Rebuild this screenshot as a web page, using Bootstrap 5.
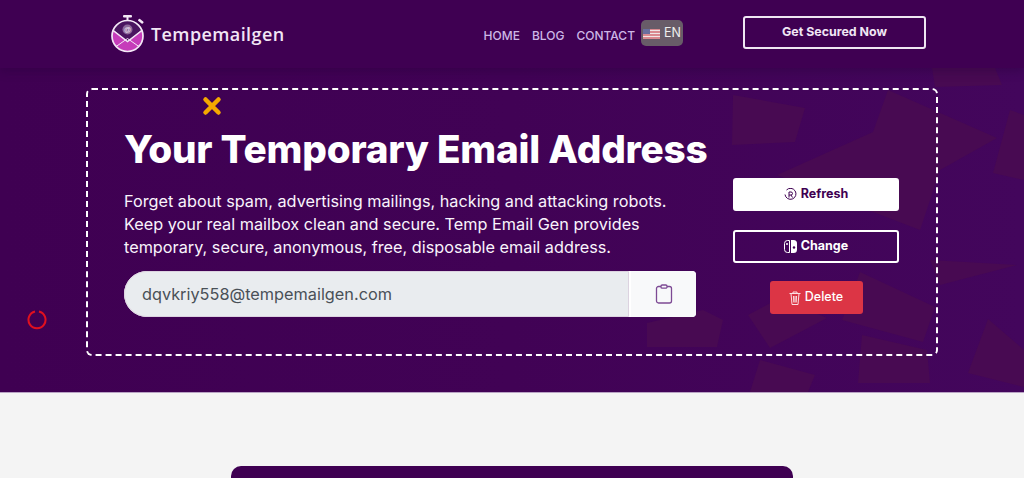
<!DOCTYPE html>
<html lang="en">
<head>
  <meta charset="UTF-8" />
  <meta name="viewport" content="width=device-width, initial-scale=1.0"/>
  <title>Tempemailgen</title>
  <link href="https://cdn.jsdelivr.net/npm/bootstrap@5.3.0/dist/css/bootstrap.min.css" rel="stylesheet"/>
  <style>
    body {
      background-color: #f4f4f4;
      font-family: "Inter", "Liberation Sans", sans-serif;
      overflow: hidden;
    }
    .page-wrap {
      height: 478px;
      overflow: hidden;
    }
    .site-head {
      position: relative;
      z-index: 2;
      height: 68px;
      background-color: #3f0052;
      box-shadow: 0 4px 8px rgba(40, 0, 60, .35);
      padding: 0 98px 0 110px;
    }
    .logo-text {
      font-family: "Open Sans", sans-serif;
      font-size: 18px;
      font-weight: 600;
      color: #f1e6f5;
      letter-spacing: .4px;
      margin-left: 5px;
    }
    .menu-link {
      font-size: 12px;
      font-weight: 500;
      color: #cdb7e6;
      text-decoration: none;
      margin-left: 12px;
      margin-top: 3px;
    }
    .lang-box {
      width: 42px;
      height: 26px;
      padding-top: 1px;
      margin-left: 6px;
      margin-top: -2px;
      border-radius: 5px;
      background-color: #685c68;
      color: #eee;
      font-size: 12.5px;
    }
    .btn-secured {
      width: 183px;
      height: 33px;
      margin-left: 60px;
      margin-top: -4px;
      padding: 0;
      border: 2px solid #efe6f3;
      border-radius: 3px;
      background: transparent;
      color: #f0e6f4;
      font-size: 12.4px;
      font-weight: 700;
    }
    .hero {
      height: 325px;
      background: linear-gradient(90deg, #3f0052 0%, #410255 50%, #43065c 100%);
      border-bottom: 1px solid #b9a3c4;
      padding: 20px 86px 0;
    }
    .hero-bg {
      position: absolute;
      top: 0;
      left: 0;
    }
    .dash-box {
      width: 852px;
      height: 268px;
      padding: 37px 36px 0;
      border: 2px dashed #fff;
      border-radius: 6px;
    }
    .deco-x {
      position: absolute;
      left: 202px;
      top: 28px;
    }
    .spin-ring {
      position: absolute;
      left: 27px;
      top: 242px;
      width: 20px;
      height: 20px;
    }
    .main-col {
      width: 572px;
      flex-shrink: 0;
    }
    .hero-title {
      font-size: 38.7px;
      font-weight: 800;
      line-height: 44px;
      color: #fff;
      margin: 0 0 19px;
      white-space: nowrap;
      letter-spacing: -.2px;
    }
    .hero-text {
      font-size: 16.25px;
      line-height: 23px;
      color: #f9f4fc;
      margin: 0 0 12px;
    }
    .mail-group {
      height: 46px;
      border-radius: 23px 4px 4px 23px;
      background-color: #fff;
    }
    .mail-input {
      flex: 1;
      padding-left: 17px;
      border-radius: 23px 0 0 23px;
      background-color: #e9ecef;
      font-size: 16.3px;
      color: #495057;
      border: 1px solid #dcd3e0;
    }
    .copy-btn {
      width: 65px;
      margin-left: 2px;
      border-radius: 0 4px 4px 0;
      background-color: #f8f9fa;
      border: 0;
      padding: 0;
    }
    .side-col {
      width: 166px;
      margin-left: 37px;
      margin-top: 51px;
    }
    .act-btn {
      width: 166px;
      height: 33px;
      padding: 0;
      font-size: 12.5px;
      font-weight: 700;
      border-radius: 3px;
      border: 2px solid #fff;
      margin-bottom: 19px;
    }
    .act-white {
      background-color: #fff;
      color: #3f0052;
    }
    .act-ghost {
      background: transparent;
      color: #fff;
    }
    .act-del {
      width: 93px;
      height: 33px;
      padding: 0;
      font-size: 12.5px;
      font-weight: 500;
      border-radius: 3px;
      background-color: #dc3545;
      border: 0;
      color: #fff;
      margin-top: -1px;
    }
    .lower {
      padding-top: 73px;
    }
    .lower-card {
      width: 562px;
      height: 40px;
      margin-left: 231px;
      border-radius: 10px;
      background-color: #3f0052;
    }
    .at-mark {
      font-size: 7px;
      font-family: "Liberation Sans", sans-serif;
    }
  </style>
</head>
<body>
  <div class="page-wrap">
    <header class="site-head d-flex align-items-center">
      <!-- logo -->
      <svg width="36" height="38" viewBox="0 0 36 38" class="flex-shrink-0">
        <defs>
          <clipPath id="watchClip"><circle cx="17.5" cy="21" r="15.5"/></clipPath>
        </defs>
        <rect x="13" y="0" width="9" height="2.6" rx="1" fill="#f3e8f6"/>
        <rect x="16.5" y="2" width="2" height="4" fill="#f3e8f6"/>
        <rect x="28" y="5" width="6" height="2.6" rx="1" fill="#f3e8f6" transform="rotate(38 31 6)"/>
        <circle cx="17.5" cy="21" r="15.5" fill="#4a1560"/>
        <g clip-path="url(#watchClip)">
          <path d="M0 12 17.5 26.5 35 12V38H0Z" fill="#c63cba"/>
          <path d="M2 14.5 17.5 26.5 33 14.500" fill="none" stroke="#f3e8f6" stroke-width="1.4"/>
          <path d="M4 33 17.500 23.500 31 33" fill="none" stroke="#f3e8f6" stroke-width="1"/>
        </g>
        <circle cx="17.5" cy="21" r="15.5" fill="none" stroke="#f3e8f6" stroke-width="1.7"/>
        <circle cx="17.5" cy="14.5" r="5" fill="#8e6b9c"/>
        <text x="17.5" y="17" text-anchor="middle" fill="#f3e8f6" class="at-mark">@</text>
      </svg>
      <span class="logo-text">Tempemailgen</span>
      <nav class="d-flex align-items-center ms-auto">
        <a href="#" class="menu-link">HOME</a>
        <a href="#" class="menu-link">BLOG</a>
        <a href="#" class="menu-link">CONTACT</a>
        <span class="lang-box d-flex align-items-center justify-content-center gap-1">
          <svg width="17" height="10" viewBox="0 0 17 10">
            <rect width="17" height="10" fill="#d98a90"/>
            <path d="M0 1.500h17M0 4.500h17M0 7.500h17" stroke="#efe6e6" stroke-width="1"/>
            <rect width="7" height="5" fill="#6a6f9e"/>
          </svg>
          <span>EN</span>
        </span>
        <button type="button" class="btn-secured">Get Secured Now</button>
      </nav>
    </header>

    <section class="hero position-relative">
      <!-- faded envelopes behind the box -->
      <svg class="hero-bg" width="1024" height="324" viewBox="0 68 1024 324">
        <g fill="#480a52">
          <path d="M932 68H995L1002 85 935 87Z"/>
          <path d="M733 95 805 108 795 142 732 145Z"/>
          <path d="M888 90 997 138 940 170 920 230 777 175 873 132Z"/>
          <path d="M1010 110 1024 115V180L993 173Z"/>
          <path d="M930 260 1017 265 940 285Z"/>
          <path d="M748 315 780 298 827 318 770 348Z"/>
          <path d="M860 272 935 307 923 342 842 320Z"/>
          <path d="M862 335 927 350 930 383H858Z"/>
          <path d="M988 319 1024 350V387L968 373Z"/>
          <path d="M760 360 815 375 808 392H750Z"/>
          <path d="M703 310 723 320 717 347H647V323Z"/>
        </g>
      </svg>
      <svg class="deco-x" width="20" height="20" viewBox="0 0 20 20">
        <path d="M3.500 3.500 16.500 16.500M16.500 3.500 3.500 16.500" stroke="#f5a800" stroke-width="4.500" stroke-linecap="round"/>
      </svg>
      <svg class="spin-ring" viewBox="0 0 20 20">
        <path d="M12 1.500A8.500 8.500 0 1 1 8 1.500" fill="none" stroke="#e0101f" stroke-width="2"/>
      </svg>
      <div class="dash-box d-flex position-relative">
        <div class="main-col">
          <h1 class="hero-title">Your Temporary Email Address</h1>
          <p class="hero-text">Forget about spam, advertising mailings, hacking and attacking robots. Keep your real mailbox clean and secure. Temp Email Gen provides temporary, secure, anonymous, free, disposable email address.</p>
          <div class="mail-group d-flex">
            <div class="mail-input d-flex align-items-center">dqvkriy558@tempemailgen.com</div>
            <button type="button" class="copy-btn d-flex align-items-center justify-content-center">
              <svg width="18" height="20" viewBox="0 0 18 20" fill="none" stroke="#7d4a94" stroke-width="1.300">
                <rect x="1.500" y="2.500" width="15" height="16.500" rx="2"/>
                <rect x="6" y="1" width="6" height="3.200" rx="1.200" fill="#f8f9fa"/>
              </svg>
            </button>
          </div>
        </div>
        <div class="side-col d-flex flex-column align-items-center flex-shrink-0">
          <button type="button" class="act-btn act-white d-flex align-items-center justify-content-center gap-1">
            <svg width="13" height="13" viewBox="0 0 13 13" fill="none" stroke="#3f0052" stroke-width="1">
              <path d="M2.500 2A5.500 5.500 0 1 1 1 6.500"/>
              <path d="M5 9.500V4h2a1.500 1.500 0 0 1 0 3H5M7 7l1.500 2.500"/>
            </svg>
            <span>Refresh</span>
          </button>
          <button type="button" class="act-btn act-ghost d-flex align-items-center justify-content-center gap-1">
            <svg width="13" height="13" viewBox="0 0 13 13">
              <path d="M5.500.500H3.500a3 3 0 0 0-3 3v6a3 3 0 0 0 3 3h2Z" fill="none" stroke="#fff"/>
              <path d="M7 0h2.500a3.500 3.500 0 0 1 3.500 3.500v6A3.500 3.500 0 0 1 9.500 13H7Z" fill="#fff"/>
              <circle cx="3" cy="4" r="1" fill="#fff"/>
              <circle cx="10" cy="7.500" r="1.200" fill="#3f0052"/>
            </svg>
            <span>Change</span>
          </button>
          <button type="button" class="act-del d-flex align-items-center justify-content-center gap-1">
            <svg width="12" height="14" viewBox="0 0 12 14" fill="none" stroke="#fbdfe2" stroke-width="1">
              <path d="M.500 2.500h11M4 2.500V1h4v1.500M2 2.500 3 13.500h6l1-11M4.500 5l.3 6.500M6 5v6.500M7.500 5l-.3 6.500"/>
            </svg>
            <span>Delete</span>
          </button>
        </div>
      </div>
    </section>

    <section class="lower">
      <div class="lower-card"></div>
    </section>
  </div>

  <script src="https://cdn.jsdelivr.net/npm/bootstrap@5.3.0/dist/js/bootstrap.bundle.min.js"></script>
</body>
</html>
